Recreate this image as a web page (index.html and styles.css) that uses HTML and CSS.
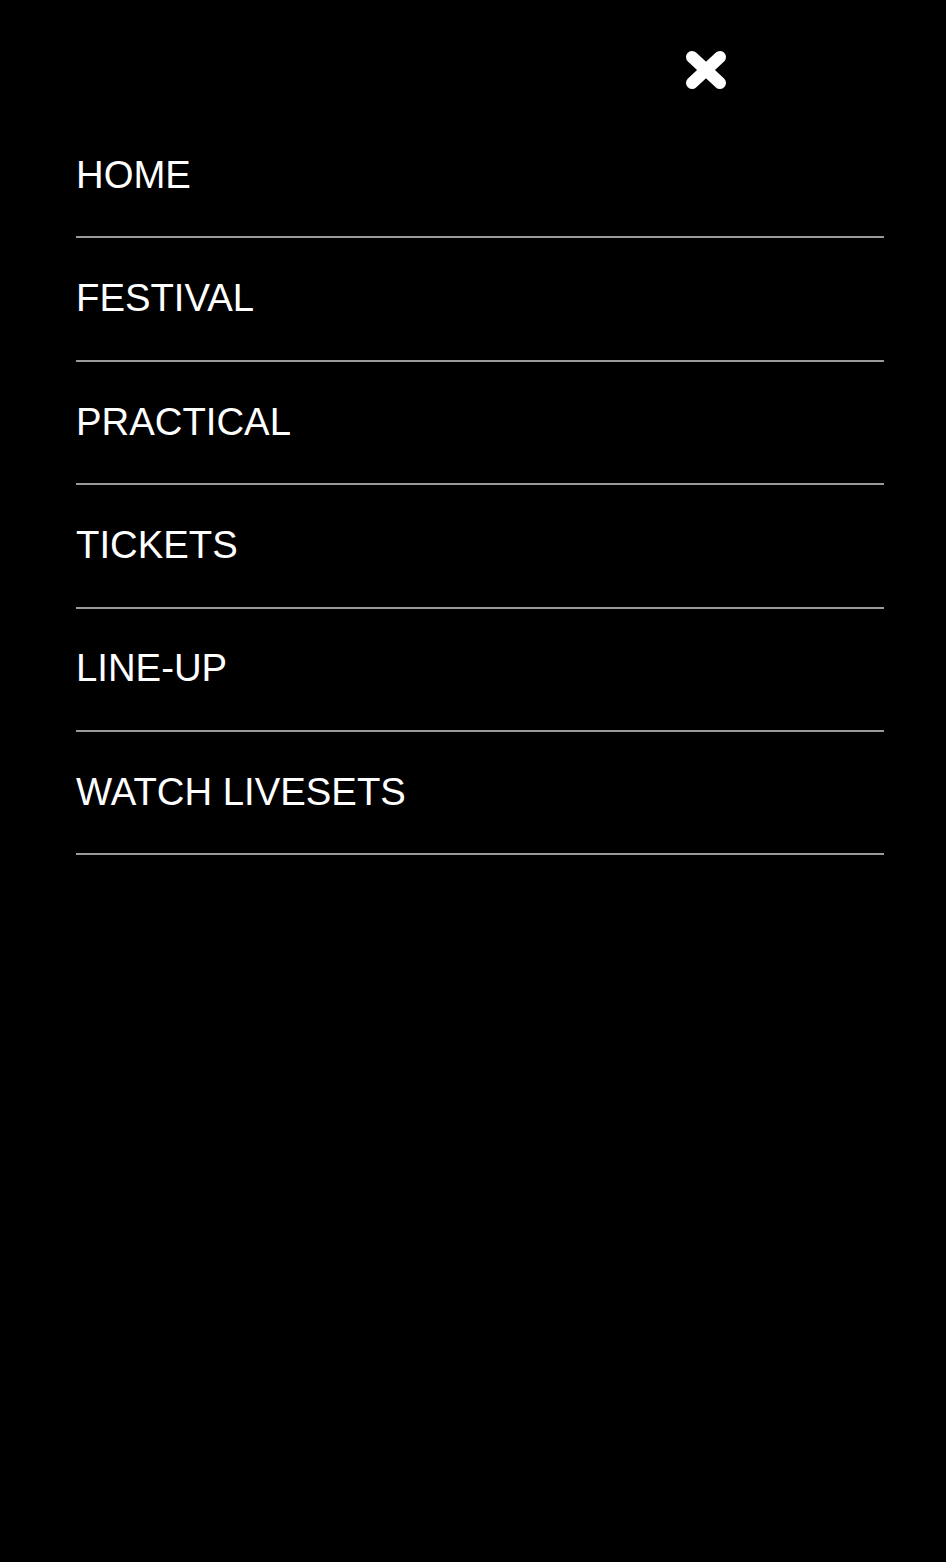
FILE: index.html
```html
<!DOCTYPE html>
<html lang="en">
<head>
<meta charset="utf-8">
<title>Menu</title>
<link rel="stylesheet" href="styles.css">
</head>
<body>
<div class="menu">
  <div class="menu-top">
    <button class="close" aria-label="Close">
      <svg width="44" height="42" viewBox="0 0 44 42">
        <line x1="8" y1="8" x2="36" y2="34" stroke="#fff" stroke-width="12" stroke-linecap="round"/>
        <line x1="36" y1="8" x2="8" y2="34" stroke="#fff" stroke-width="12" stroke-linecap="round"/>
      </svg>
    </button>
  </div>
  <nav class="nav">
    <a class="nav-item" href="#">HOME</a>
    <a class="nav-item" href="#">FESTIVAL</a>
    <a class="nav-item" href="#">PRACTICAL</a>
    <a class="nav-item" href="#">TICKETS</a>
    <a class="nav-item" href="#">LINE-UP</a>
    <a class="nav-item" href="#">WATCH LIVESETS</a>
  </nav>
</div>
</body>
</html>
```
FILE: styles.css
```css
html, body {
  margin: 0;
  padding: 0;
  background: #000;
  height: 100%;
}
body {
  font-family: "Liberation Sans", Arial, sans-serif;
  color: #fff;
}
.menu {
  padding: 0 62px 0 76px;
}
.menu-top {
  display: flex;
  height: 115px;
  align-items: flex-start;
}
.close {
  margin: 49px 0 0 608px;
  padding: 0;
  border: 0;
  background: none;
  width: 44px;
  height: 42px;
  cursor: pointer;
}
.close svg {
  display: block;
  filter: blur(0.6px);
}
.nav {
  display: flex;
  flex-direction: column;
}
.nav-item {
  display: block;
  color: #fff;
  text-decoration: none;
  font-size: 38.3px;
  line-height: 43.7px;
  padding: 37.85px 0 39.85px;
  border-bottom: 2px solid #9a9a9a;
}
```
